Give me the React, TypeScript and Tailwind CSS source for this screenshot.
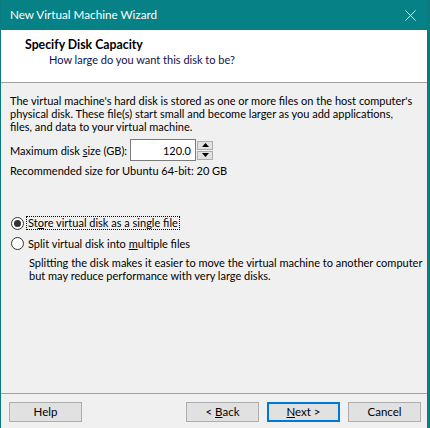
import React from "react";

const font = { fontFamily: 'Lato, "Noto Sans", sans-serif' };

function Btn({ children, primary, className = "" }: { children: React.ReactNode; primary?: boolean; className?: string }) {
  return (
    <div
      className={
        "w-[73px] h-[20px] flex items-center justify-center bg-[#e1e1e1] text-[11.5px] text-black leading-none " +
        (primary ? "border-2 border-[#0078d7]" : "border border-[#adadad]") +
        " " +
        className
      }
    >
      <span className="whitespace-pre">{children}</span>
    </div>
  );
}

function Radio({ checked }: { checked?: boolean }) {
  return (
    <div className="w-[13px] h-[13px] rounded-full border border-[#333333] bg-white flex items-center justify-center shrink-0">
      {checked && <div className="w-[7px] h-[7px] rounded-full bg-[#333333]" />}
    </div>
  );
}

export default function App() {
  return (
    <div className="w-[430px] h-[428px] flex flex-col bg-[#f0f0f0] border-l border-r-[3px] border-[#0a7c80] text-[11px] text-black" style={font}>
      <div className="h-[30px] shrink-0 bg-[#068286] flex items-center justify-between pl-[9px] pr-[10px] text-white">
        <span className="text-[11.7px]">New Virtual Machine Wizard</span>
        <svg width="11" height="11" viewBox="0 0 11 11" className="mr-[1px]">
          <path d="M0.5 0.5 L10.5 10.5 M10.5 0.5 L0.5 10.5" stroke="white" strokeWidth="1" />
        </svg>
      </div>
      <div className="h-[53px] shrink-0 bg-white border-b border-[#a0a0a0] pl-[24px] pt-[7px]">
        <div className="font-bold text-[12.3px] leading-[15px]">Specify Disk Capacity</div>
        <div className="pl-[24px] leading-[15px] text-[#10104a]">How large do you want this disk to be?</div>
      </div>
      <div className="flex-1 px-[9px] pt-[11px] leading-[13px] whitespace-nowrap">
        <p>
          The virtual machine's hard disk is stored as one or more files on the host computer's
          <br />
          physical disk. These file(s) start small and become larger as you add applications,
          <br />
          files, and data to your virtual machine.
        </p>
        <div className="flex items-center mt-[6px] h-[22px]">
          <span className="w-[120px]">
            Maximum disk <u>s</u>ize (GB):
          </span>
          <div className="w-[66px] h-[22px] border border-[#7a7a7a] bg-white flex items-center justify-end pr-[4px]">120.0</div>
          <div className="ml-[1px] flex flex-col gap-[1px]">
            <div className="w-[16px] h-[9px] border border-[#adadad] bg-[#e1e1e1] flex items-center justify-center">
              <svg width="7" height="4" viewBox="0 0 7 4"><path d="M3.5 0 L7 4 L0 4 Z" fill="black" /></svg>
            </div>
            <div className="w-[16px] h-[9px] border border-[#adadad] bg-[#e1e1e1] flex items-center justify-center">
              <svg width="7" height="4" viewBox="0 0 7 4"><path d="M0 0 L7 0 L3.5 4 Z" fill="black" /></svg>
            </div>
          </div>
        </div>
        <div className="mt-[3px]">Recommended size for Ubuntu 64-bit: 20 GB</div>
        <div className="mt-[39px] flex items-center h-[14px] pl-[1px]">
          <Radio checked />
          <span className="ml-[2px] border border-dotted border-black px-[1px] leading-[12px]">
            St<u>o</u>re virtual disk as a single file
          </span>
        </div>
        <div className="mt-[6px] flex items-center h-[14px] pl-[1px]">
          <Radio />
          <span className="ml-[3px] px-[1px]">
            Split virtual disk into <u>m</u>ultiple files
          </span>
        </div>
        <p className="mt-[6px] pl-[19px]">
          Splitting the disk makes it easier to move the virtual machine to another computer
          <br />
          but may reduce performance with very large disks.
        </p>
      </div>
      <div className="h-[35px] shrink-0 border-t border-[#a0a0a0] pt-[8px] pl-[8px] pr-[6px] flex">
        <Btn>Help</Btn>
        <div className="flex-1" />
        <Btn>
          &lt; <u>B</u>ack
        </Btn>
        <Btn primary className="ml-[8px]">
          <u>N</u>ext &gt;
        </Btn>
        <Btn className="ml-[8px]">Cancel</Btn>
      </div>
    </div>
  );
}
